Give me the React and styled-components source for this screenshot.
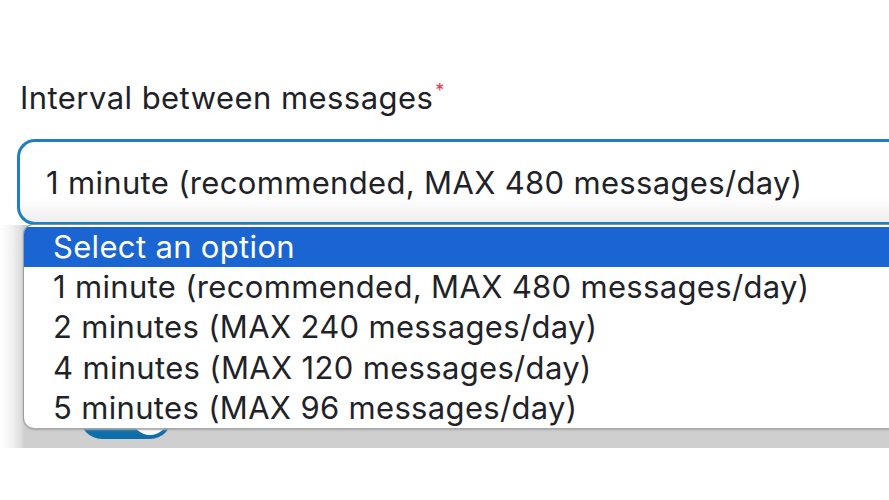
import React from "react";
import styled, { createGlobalStyle } from "styled-components";

const Global = createGlobalStyle`
  html, body { margin: 0; padding: 0; background: #ffffff; }
  body { font-family: Inter, "Noto Sans", sans-serif; color: #1f2328; overflow: hidden; }
`;

const Page = styled.div`
  width: 889px;
  height: 500px;
  overflow: hidden;
  padding-top: 76px;
  box-sizing: border-box;
`;

const Label = styled.div`
  font-size: 31px;
  letter-spacing: 0.45px;
  line-height: 44px;
  padding-left: 20px;
  color: #1e2227;
  white-space: nowrap;
`;

const Required = styled.sup`
  color: #e0394f;
  font-size: 18px;
  margin-left: 2px;
  vertical-align: 12px;
  line-height: 0;
`;

const SelectBox = styled.div`
  margin: 19px 0 0 17px;
  width: 900px;
  height: 86px;
  box-sizing: border-box;
  border: 3px solid #1c80c3;
  border-right: none;
  border-radius: 18px 0 0 18px;
  background: linear-gradient(to bottom, #ffffff 70%, #eeeeee 100%);
  display: flex;
  align-items: center;
  padding-left: 26px;
  font-size: 31px;
  letter-spacing: 0.33px;
  color: #1f2328;
  white-space: nowrap;
`;

const Dimmed = styled.div`
  position: relative;
  height: 223px;
  background: linear-gradient(to right, #ffffff 0px, #f1f1f1 12px, #dddddd 21px, #cfcfcf 24px);
`;

const Toggle = styled.div`
  position: absolute;
  left: 80px;
  top: 170px;
  width: 92px;
  height: 44px;
  border-radius: 22px;
  background: #0d6ea9;
  &::after {
    content: "";
    position: absolute;
    right: 4px;
    top: 4px;
    width: 36px;
    height: 36px;
    border-radius: 50%;
    background: #ffffff;
  }
`;

const Menu = styled.ul`
  position: absolute;
  left: 24px;
  top: 0;
  right: -20px;
  margin: 0;
  padding: 2px 0 0;
  list-style: none;
  background: #ffffff;
  border-radius: 9px 0 0 10px;
  box-shadow: 0 -1px 0 #8c8c8c, -1px 0 1px #9a9a9a, 0 2px 2px #a9a9a9;
  overflow: hidden;
  font-size: 31px;
  letter-spacing: 0.33px;
`;

const Option = styled.li`
  height: 40.2px;
  line-height: 40px;
  padding-left: 29px;
  white-space: nowrap;
  color: ${(p) => (p.$active ? "#ffffff" : "#1f2328")};
  background: ${(p) => (p.$active ? "#1a65d1" : "transparent")};
`;

const options = [
  "Select an option",
  "1 minute (recommended, MAX 480 messages/day)",
  "2 minutes (MAX 240 messages/day)",
  "4 minutes (MAX 120 messages/day)",
  "5 minutes (MAX 96 messages/day)",
];

export default function App() {
  return (
    <Page>
      <Global />
      <Label>
        Interval between messages<Required>*</Required>
      </Label>
      <SelectBox>1 minute (recommended, MAX 480 messages/day)</SelectBox>
      <Dimmed>
        <Toggle />
        <Menu>
          {options.map((o, i) => (
            <Option key={o} $active={i === 0}>
              {o}
            </Option>
          ))}
        </Menu>
      </Dimmed>
    </Page>
  );
}
